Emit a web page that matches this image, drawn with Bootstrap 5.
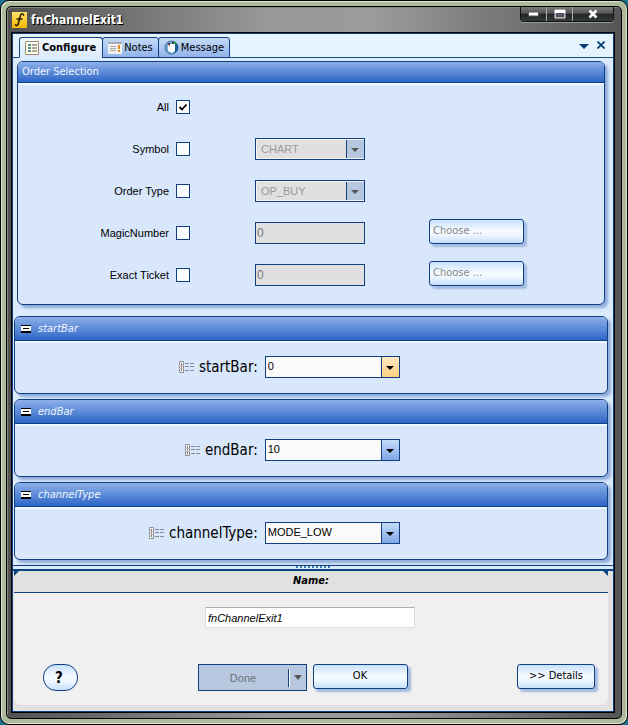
<!DOCTYPE html>
<html lang="en">
<head>
<meta charset="utf-8">
<meta name="viewport" content="width=device-width, initial-scale=1">
<title>fnChannelExit1</title>
<link href="https://cdn.jsdelivr.net/npm/bootstrap@5.3.0/dist/css/bootstrap.min.css" rel="stylesheet">
<style>
:root{--line:#123f80;--pane:#d8e7fc;--ui:"DejaVu Sans Condensed","Noto Sans",sans-serif;--txt:"Liberation Sans",Arial,sans-serif}
body{background:#1d6f92;font:11px/16px var(--ui);color:#000}
.win-outer{min-height:100vh;border:1px solid #000;border-radius:9px;padding:5px;background:#acb99b;box-shadow:inset 1px 1px #e4eadb,inset -1px -1px #dfe6d3}
.win-inner{border:1px solid #000;border-radius:5px;padding:0 7px 6px 5px;background:linear-gradient(90deg,#525252,#989898 42%,#9b9b9b 60%,#555);box-shadow:inset 1px 1px #858585}
.titlebar{height:26px}
.title-text{font-weight:700;font-size:12px;line-height:18px;color:#fff;text-shadow:1px 1px #000;font-family:"DejaVu Sans Condensed",sans-serif}
.win-btns{border:1px solid #111;border-top:0;border-radius:0 0 4px 4px;box-shadow:0 1px #999;overflow:hidden}
.win-btns button{height:14px;width:26px;padding:0;border:0;border-right:1px solid #aaa;background:linear-gradient(#7b7b7b,#555 45%,#202424 50%,#353a3a);display:flex;justify-content:center;align-items:center}
.win-btns button:last-child{width:40px;border-right:0}
.client{border:1px solid var(--line);outline:1px solid #000;background:#dceafd}
.tabstrip{background:#e5f3ff;border-bottom:1px solid #145078;height:24px;padding:3px 8px 0 6px}
.tab-btn{height:21px;padding:0 5px;border:1px solid var(--line);border-radius:3px 3px 0 0;background:linear-gradient(#c5daf8,#92b4ea);gap:2px;margin-left:-1px;color:#000}
.tab-btn.on{background:linear-gradient(#f1f8ff,#dceafd);border-bottom-color:#dceafd;font-weight:700;margin-left:0;padding:0 6px 0 5px;gap:3px}
.icon-btn{border:0;background:none;padding:0;line-height:0}
.work{padding:3px 5px 5px 1px}
.group{border:1px solid var(--line);border-radius:6px;background:var(--pane);box-shadow:3px 3px 3px #8eabda}
.group-head{border-bottom:1px solid var(--line);border-radius:5px 5px 0 0;background:linear-gradient(#8db0e9,#2d66c7);color:#f2f7ff;box-shadow:0 2px #eef8ff}
.main-group{margin:0 3px 11px}
.main-group .group-head{height:21px;padding:2px 4px}
.param{margin-bottom:5px}
.param .group-head{height:24px;padding:0 6px;gap:7px;font-style:italic}
.param-body{height:52px;gap:7px}
.param-label{width:41%;font-size:15px;line-height:20px;gap:5px}
.sel-grid{padding:3px 0 8px;font:11px/16px var(--txt)}
.sel-row{display:grid;grid-template-columns:minmax(90px,158fr) 79px 174px minmax(100px,175fr);height:42px;align-items:center}
.sel-row label{text-align:right;padding-right:7px}
.tick{appearance:none;width:14px;height:14px;border:1px solid var(--line);border-radius:0;background:#fafdff;margin:0;display:block}
.tick:checked{background:#fff url("data:image/svg+xml,%3Csvg xmlns='http://www.w3.org/2000/svg' viewBox='0 0 12 12'%3E%3Cpath d='M2.500 6L5 8.500 9.500 3.500' fill='none' stroke='%23000' stroke-width='1.800'/%3E%3C/svg%3E") center/12px 12px no-repeat}
.combo{appearance:none;height:22px;border:1px solid var(--line);border-radius:0;color:#000;opacity:1;padding:0 20px 2px 2px;font:11px/16px var(--txt);
 background:url("data:image/svg+xml,%3Csvg xmlns='http://www.w3.org/2000/svg' viewBox='0 0 8 5'%3E%3Cpath d='M0 0h8L4 4z' fill='%23000'/%3E%3C/svg%3E") right 5px top 9px/8px 5px no-repeat,linear-gradient(90deg,var(--line) 1px,transparent 1px) right/18px 100% no-repeat,linear-gradient(#c5dcfa,#7fa6e4) right/18px 100% no-repeat,#fafafa;width:135px}
.combo.hot{background-image:url("data:image/svg+xml,%3Csvg xmlns='http://www.w3.org/2000/svg' viewBox='0 0 8 5'%3E%3Cpath d='M0 0h8L4 4z' fill='%23000'/%3E%3C/svg%3E"),linear-gradient(90deg,var(--line) 1px,transparent 1px),linear-gradient(#ffe9c0,#ffcf80)}
.combo.off{width:110px;color:#999;padding:0 20px 0 5px;box-shadow:inset 1px 1px #f4f4f4,inset 0 -1px #f4f4f4;background-color:#e0e0e0;background-image:url("data:image/svg+xml,%3Csvg xmlns='http://www.w3.org/2000/svg' viewBox='0 0 8 5'%3E%3Cpath d='M0 0h8L4 4z' fill='%23555'/%3E%3C/svg%3E"),linear-gradient(90deg,var(--line) 1px,transparent 1px),linear-gradient(#b6c7e0,#b6c7e0)}
.num{width:110px;height:22px;border:1px solid var(--line);border-radius:0;background:#e0e0e0;color:#777;padding:0 1px;font:12px/16px var(--txt)}
.soft-btn{height:25px;border:1px solid var(--line);border-radius:3px;padding:0 3px 2px;background:linear-gradient(#c8e0fc,#f4faff 45%,#f0f8ff 65%,#c5defb);box-shadow:3px 3px 2px #a3bbe2;font:11px/16px var(--ui);color:#000}
.w-95{width:95px}
.choose{margin-bottom:4px;padding-bottom:0;text-align:left;color:#888}
.details{width:78px}
.splitter{height:6px;border-top:1px solid var(--line);border-bottom:2px solid #0c4482;background:#d9ecff}
.grip{width:35px;height:2px;background:repeating-linear-gradient(90deg,#3c75b0 0 2px,#eef8ff 2px 4px)}
.lower{background:#e1e1e1;padding:0 5px 6px 1px}
.name-head{height:22px;border-bottom:1px solid var(--line);font-weight:700;font-style:italic;line-height:20px;background:linear-gradient(135deg,#0c4482 3px,transparent 4px),linear-gradient(225deg,#0c4482 3px,transparent 4px)}
.lower-body{background:#f0f0f0;border-radius:0 0 8px 8px;padding:14px 13px 14px 29px}
.name-box{width:210px;height:21px;border:1px solid #dcdfe2;border-top-color:#abadb3;border-radius:1px;background:#fff;padding:0 2px;font:italic 11px/16px var(--txt);margin-left:-18px}
.btn-row{margin-top:36px}
.help{width:35px;height:27px;border-radius:13px;font:700 15px/20px "DejaVu Sans Condensed",sans-serif;box-shadow:none;padding:0 3px 0 0}
.mid{gap:6px;margin-left:10px}
.done{width:109px;height:27px;border:1px solid var(--line);background:#b8c8e0;color:#6b7178;padding:0;font:11px/16px var(--txt)}
.done .bar{width:2px;height:18px;background:linear-gradient(90deg,var(--line) 50%,#fff 50%)}
</style>
</head>
<body>
<div class="win-outer d-flex flex-column">
<div class="win-inner flex-grow-1 d-flex flex-column">
  <header class="titlebar d-flex">
    <div class="d-flex align-items-center flex-grow-1">
      <svg class="ms-n1" width="15" height="16" viewBox="0 0 15 16"><defs><linearGradient id="gy" x2="0" y2="1"><stop stop-color="#ffe36a"/><stop offset="1" stop-color="#f3b600"/></linearGradient></defs><path d="M0 0h15v16H0z" fill="url(#gy)"/><path d="M12 3.500Q9-.5 8 5L6.500 11Q5.500 15 3 12.500M4.500 7h6" fill="none" stroke="#221800" stroke-width="1.500"/></svg>
      <span class="title-text ms-1">fnChannelExit1</span>
    </div>
    <div class="win-btns d-flex align-self-start">
      <button type="button" aria-label="Minimize"><svg width="11" height="6" viewBox="0 0 11 6"><path d="M.5 1h10v4H.5z" fill="#fff" stroke="#555"/></svg></button>
      <button type="button" aria-label="Maximize"><svg width="12" height="10" viewBox="0 0 12 10"><path d="M1 1h10v8H1z" fill="#556"  stroke="#f4f4f4"/><path d="M1 1h10v3H1z" fill="#fff"/></svg></button>
      <button type="button" aria-label="Close"><svg width="12" height="10" viewBox="0 0 12 10"><path d="M2.500 1.500l7 7m0-7l-7 7" stroke="#fff" stroke-width="2.600"/></svg></button>
    </div>
  </header>
  <div class="client flex-grow-1 d-flex flex-column">
    <nav class="tabstrip d-flex align-items-start">
      <button type="button" class="tab-btn on d-flex align-items-center"><svg width="14" height="14" viewBox="0 0 14 14"><path d="M.5.500h13v13H.5z" fill="#fffbe8" stroke="#989070"/><path d="M3 3h3v2H3zm0 3h3v2H3zm0 3h3v2H3z" fill="#5d8b87"/><path d="M7 4h5M7 7h5M7 10h5" stroke="#555"/></svg>Configure</button>
      <button type="button" class="tab-btn d-flex align-items-center"><svg width="14" height="12" viewBox="0 0 14 12"><path d="M0 0h14v12H0z" fill="#f2f1ed"/><path d="M0 0h14v2H0z" fill="#a9a9b5"/><path d="M2 4.500h6M2 6.500h6M2 8.500h6" stroke="#aaa"/><path d="M10 3h2v4h-2zm0 5h2v2h-2z" fill="#e98a15"/></svg>Notes</button>
      <button type="button" class="tab-btn d-flex align-items-center"><svg width="15" height="15" viewBox="0 0 15 15"><circle cx="7.500" cy="7.500" r="6.500" fill="#6ea4d0" stroke="#466f9f"/><path d="M9 1q5 1 5 7l-3 5-3-4z" fill="#2e9a54"/><path d="M11 4l3 1v5l-3 3z" fill="#1d5f9c"/><path d="M4 4h7v7l-3 2-4-2z" fill="#fff"/><path d="M4 3h2v2H4zm4-1h2v2H8z" fill="#37485c"/><path d="M5 4h1v2H5z" fill="#c33"/></svg>Message</button>
      <div class="ms-auto d-flex align-items-center gap-2 pt-1">
        <button type="button" class="icon-btn" aria-label="Tab list"><svg width="10" height="8" viewBox="0 0 10 8"><path d="M0 3h10L5 8z" fill="#063c78"/></svg></button>
        <button type="button" class="icon-btn" aria-label="Close tab"><svg width="8" height="8" viewBox="0 0 8 8"><path d="M.5.500l7 7m0-7l-7 7" stroke="#063c78" stroke-width="1.800"/></svg></button>
      </div>
    </nav>
    <main class="work flex-grow-1">
      <section class="group main-group">
        <div class="group-head">Order Selection</div>
        <div class="sel-grid">
          <div class="sel-row"><label for="all">All</label><input id="all" class="tick" type="checkbox" checked></div>
          <div class="sel-row"><label for="sym">Symbol</label><input id="sym" class="tick" type="checkbox"><select class="combo off" aria-label="Symbol value" disabled><option>CHART</option></select></div>
          <div class="sel-row"><label for="typ">Order Type</label><input id="typ" class="tick" type="checkbox"><select class="combo off" aria-label="Order type value" disabled><option>OP_BUY</option></select></div>
          <div class="sel-row"><label for="mag">MagicNumber</label><input id="mag" class="tick" type="checkbox"><input class="num" type="text" value="0" aria-label="Magic number value" disabled><button type="button" class="soft-btn choose w-95" disabled>Choose ...</button></div>
          <div class="sel-row"><label for="tic">Exact Ticket</label><input id="tic" class="tick" type="checkbox"><input class="num" type="text" value="0" aria-label="Ticket value" disabled><button type="button" class="soft-btn choose w-95" disabled>Choose ...</button></div>
        </div>
      </section>
      <svg class="d-none"><defs>
        <symbol id="minus" viewBox="0 0 10 8"><path d="M0 0h10v8H0z" fill="#fff"/><path d="M0 0h10v1H0zm0 6h10v2H0zM2 3h6v1H2z" fill="#000"/></symbol>
        <symbol id="list" viewBox="0 0 15 12"><path d="M.5.500h4v11h-4z" fill="#f7f7f7" stroke="#8b8f95"/><path d="M2 2h1v2H2zm0 6h1v2H2z" fill="#777"/><path d="M2 5h1v2H2z" fill="#c77"/><path d="M0 4.500h5M0 7.500h5" stroke="#b4b8be"/><path d="M6 2.500h4m1 0h4M6 5.500h4m1 0h4M6 9.500h4m1 0h4" stroke="#858b96"/></symbol>
      </defs></svg>
      <section class="group param">
        <div class="group-head d-flex align-items-center"><svg width="10" height="8"><use href="#minus"/></svg>startBar</div>
        <div class="param-body d-flex align-items-center"><label for="sb" class="param-label d-flex align-items-center justify-content-end"><svg width="15" height="12"><use href="#list"/></svg>startBar:</label><select id="sb" class="combo hot"><option>0</option></select></div>
      </section>
      <section class="group param">
        <div class="group-head d-flex align-items-center"><svg width="10" height="8"><use href="#minus"/></svg>endBar</div>
        <div class="param-body d-flex align-items-center"><label for="eb" class="param-label d-flex align-items-center justify-content-end"><svg width="15" height="12"><use href="#list"/></svg>endBar:</label><select id="eb" class="combo"><option>10</option></select></div>
      </section>
      <section class="group param mb-0">
        <div class="group-head d-flex align-items-center"><svg width="10" height="8"><use href="#minus"/></svg>channelType</div>
        <div class="param-body d-flex align-items-center"><label for="ct" class="param-label d-flex align-items-center justify-content-end"><svg width="15" height="12"><use href="#list"/></svg>channelType:</label><select id="ct" class="combo"><option>MODE_LOW</option></select></div>
      </section>
    </main>
    <div class="splitter d-flex justify-content-center"><div class="grip"></div></div>
    <footer class="lower">
      <label for="nm" class="name-head d-block text-center">Name:</label>
      <div class="lower-body">
        <div class="text-center"><input id="nm" class="name-box" type="text" value="fnChannelExit1"></div>
        <div class="btn-row d-flex justify-content-between align-items-start">
          <button type="button" class="soft-btn help">?</button>
          <div class="mid d-flex align-items-start">
            <button type="button" class="done d-flex align-items-center" disabled><span class="flex-grow-1">Done</span><span class="bar"></span><svg class="mx-1" width="8" height="5" viewBox="0 0 8 5"><path d="M0 0h8L4 5z" fill="#555"/></svg></button>
            <button type="button" class="soft-btn w-95">OK</button>
          </div>
          <button type="button" class="soft-btn details">&gt;&gt; Details</button>
        </div>
      </div>
    </footer>
  </div>
</div>
</div>
<script src="https://cdn.jsdelivr.net/npm/bootstrap@5.3.0/dist/js/bootstrap.bundle.min.js"></script>
</body>
</html>
